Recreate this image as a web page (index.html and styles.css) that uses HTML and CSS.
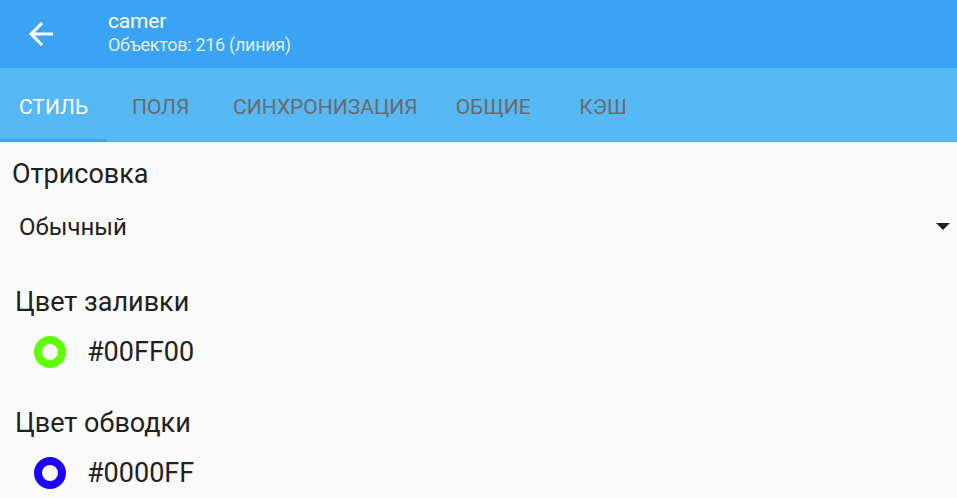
FILE: index.html
```html
<!DOCTYPE html>
<html lang="ru">
<head>
<meta charset="utf-8">
<link rel="stylesheet" href="styles.css">
</head>
<body>
<header class="appbar">
  <button class="back" aria-label="Назад">
    <svg viewBox="0 0 24 24" width="36" height="36"><path d="M20 11H7.83l5.59-5.59L12 4l-8 8 8 8 1.41-1.41L7.83 13H20v-2z" fill="#fff"/></svg>
  </button>
  <div class="titles">
    <div class="title">camer</div>
    <div class="subtitle">Объектов: 216 (линия)</div>
  </div>
</header>
<nav class="tabs">
  <div class="tab active">СТИЛЬ</div>
  <div class="tab">ПОЛЯ</div>
  <div class="tab">СИНХРОНИЗАЦИЯ</div>
  <div class="tab">ОБЩИЕ</div>
  <div class="tab">КЭШ</div>
</nav>
<main class="content">
  <div class="section-title">Отрисовка</div>
  <div class="select">
    <span>Обычный</span>
    <span class="caret"></span>
  </div>
  <div class="section-title fill-title">Цвет заливки</div>
  <div class="color-row">
    <span class="ring green"></span>
    <span class="hex">#00FF00</span>
  </div>
  <div class="section-title stroke-title">Цвет обводки</div>
  <div class="color-row">
    <span class="ring blue"></span>
    <span class="hex">#0000FF</span>
  </div>
</main>
</body>
</html>
```
FILE: styles.css
```css
* { box-sizing: border-box; }
html, body { margin: 0; padding: 0; }
body {
  width: 957px;
  height: 498px;
  overflow: hidden;
  background: #fafafa;
  font-family: Roboto, "Noto Sans", sans-serif;
  color: #212121;
}
.appbar {
  height: 68px;
  background: #3ba3f3;
  display: flex;
  align-items: center;
}
.back {
  width: 36px;
  height: 36px;
  margin-left: 23px;
  padding: 0;
  border: 0;
  background: none;
  display: flex;
}
.titles {
  margin-left: 49px;
  margin-top: -2px;
  color: #fff;
}
.title {
  font-size: 21px;
  line-height: 24px;
  letter-spacing: -0.2px;
}
.subtitle {
  font-size: 18px;
  line-height: 24px;
  letter-spacing: -0.3px;
  color: rgba(255,255,255,0.85);
}
.tabs {
  height: 74px;
  background: #56b8f4;
  display: flex;
}
.tab {
  min-width: 107px;
  padding: 6px 19px 0;
  display: flex;
  align-items: center;
  justify-content: center;
  font-size: 21px;
  color: #6a6a6a;
  border-bottom: 3px solid transparent;
}
.tab.active {
  color: #fff;
  border-bottom-color: #3ba3f3;
}
.content {
  padding: 0 0 0 12px;
}
.section-title {
  font-size: 27px;
  line-height: 40px;
  margin-top: 12px;
}
.fill-title {
  margin-left: 3px;
  margin-top: 24px;
}
.stroke-title {
  margin-left: 3px;
  margin-top: 22px;
}
.select {
  display: flex;
  align-items: center;
  justify-content: space-between;
  height: 64px;
  padding: 1px 7px 0 7px;
  font-size: 24px;
}
.caret {
  width: 0;
  height: 0;
  border-left: 7px solid transparent;
  border-right: 7px solid transparent;
  border-top: 7px solid #212121;
}
.color-row {
  display: flex;
  align-items: center;
  height: 59px;
  padding-left: 22px;
}
.ring {
  width: 32px;
  height: 32px;
  border-radius: 50%;
  border: 8px solid;
}
.ring.green { border-color: #5cff00; }
.ring.blue { border-color: #1c00ff; }
.hex {
  font-size: 27px;
  margin-left: 21px;
}
```
